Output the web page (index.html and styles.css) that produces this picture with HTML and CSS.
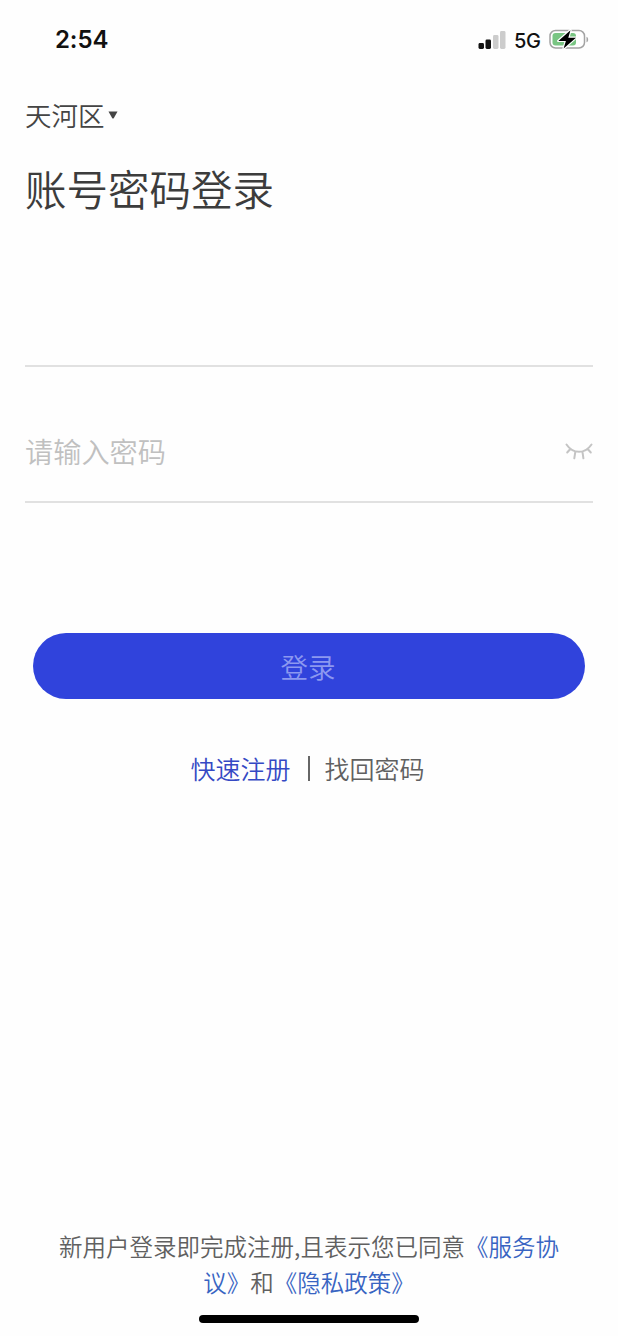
FILE: index.html
```html
<!DOCTYPE html>
<html lang="zh-CN">
<head>
<meta charset="utf-8">
<title>账号密码登录</title>
<link rel="stylesheet" href="styles.css">
</head>
<body>
<div class="screen">
  <header class="status-bar">
    <span class="time">2:54</span>
    <div class="indicators">
      <svg class="signal" width="28" height="20" viewBox="0 0 28 20">
        <rect x="0.5" y="13" width="5.500" height="6" rx="1.4" fill="#111"/>
        <rect x="7.500" y="9.500" width="5.500" height="9.500" rx="1.4" fill="#111"/>
        <rect x="15" y="5" width="5.500" height="14" rx="1.4" fill="#ccc"/>
        <rect x="22" y="1" width="5.500" height="18" rx="1.4" fill="#ccc"/>
      </svg>
      <span class="network">5G</span>
      <svg class="battery" width="41" height="22" viewBox="0 0 41 22">
        <rect x="1" y="1.500" width="34.5" height="17.500" rx="5.5" fill="#fff" stroke="#a3a3a3" stroke-width="1.5"/>
        <rect x="3.5" y="4" width="23.500" height="12.500" rx="3" fill="#79c583"/>
        <path d="M37.5 7.7c2.2.8 2.2 4.8 0 5.600z" fill="#a3a3a3"/>
        <path d="M21.500 1.200 9.300 11.900h7.600L14.600 19.600 27 8.700h-7.700z" fill="#000" stroke="#fff" stroke-width="2.4" paint-order="stroke" stroke-linejoin="round"/>
      </svg>
    </div>
  </header>
  <main class="login">
    <div class="district"><span>天河区</span><svg width="10" height="8" viewBox="0 0 10 8"><path d="M.5 .4h9L5.9 7q-.9 1-1.8 0z" fill="#444"/></svg></div>
    <h1 class="title">账号密码登录</h1>
    <div class="field account"></div>
    <div class="field password">
      <span class="placeholder">请输入密码</span>
      <svg class="eye" width="28" height="20" viewBox="0 0 28 20" fill="none" stroke="#c4c4c4" stroke-width="2" stroke-linecap="round">
        <path d="M1.500 2.500C8 12.200 20 12.200 26.500 2.500M5.300 7 2.200 10.500M10.400 9.400 9.300 16.300M17.400 9.400 18.400 16.300M22.700 7 25.800 10.500"/>
      </svg>
    </div>
    <button class="submit" type="button">登录</button>
    <nav class="links"><a class="register">快速注册</a><i class="divider"></i><a>找回密码</a></nav>
  </main>
  <footer class="agreement">
    <p>新用户登录即完成注册,且表示您已同意<a>《服务协</a></p>
    <p><a>议》</a>和<a>《隐私政策》</a></p>
    <div class="home-indicator"></div>
  </footer>
</div>
</body>
</html>
```
FILE: styles.css
```css
* { box-sizing: border-box; }
body { margin: 0; background: #fff; }
.screen {
  width: 618px;
  height: 1336px;
  display: flex;
  flex-direction: column;
  background: #fefefe;
  color: #444;
  font-family: "Noto Sans CJK SC", sans-serif;
  font-weight: 350;
  overflow: hidden;
}
.status-bar {
  height: 80px;
  padding: 0 28px 0 55px;
  display: flex;
  align-items: center;
  justify-content: space-between;
  font-family: Inter, sans-serif;
  color: #111;
}
.time { font-size: 24px; font-weight: 600; line-height: 30px; letter-spacing: -.1px; }
.indicators { display: flex; align-items: center; }
.network { margin: 1px 8px 0 8px; width: 27px; font-size: 20px; font-weight: 500; line-height: 24px; letter-spacing: -.3px; }
.login { display: flex; flex-direction: column; padding: 0 25px; }
.district { height: 70px; display: flex; align-items: center; gap: 3px; font-size: 26.500px; line-height: 70px; }
.title { margin: 0; height: 78px; font-size: 41.500px; line-height: 76px; font-weight: 350; color: #3c3c3c; }
.field { border-bottom: 2px solid #e1e1e1; }
.account { height: 139px; }
.password {
  height: 136px;
  padding-top: 34px;
  display: flex;
  align-items: center;
  justify-content: space-between;
}
.placeholder { font-size: 28.200px; line-height: 40px; color: #c0c0c0; }
.eye { margin-top: 2px; }
.submit {
  height: 66px;
  margin: 130px 8px 0;
  padding: 0 2px 0 0;
  border: 0;
  border-radius: 33px;
  background: #3043dc;
  color: #8c98f0;
  font: 350 27.500px/66px "Noto Sans CJK SC", sans-serif;
}
.links { margin-top: 51px; padding-right: 3px; display: flex; align-items: center; justify-content: center; font-size: 25px; line-height: 36px; color: #606060; }
.register { color: #3549c4; }
.divider { width: 2px; height: 25px; margin: 0 15px 0 17px; background: #666; }
.agreement { margin-top: auto; display: flex; flex-direction: column; align-items: center; font-size: 23.500px; line-height: 36px; color: #606060; white-space: nowrap; }
.agreement p { margin: 0; }
.agreement a { color: #3864c2; }
.home-indicator { width: 220px; height: 8px; margin: 15px 0 13px; border-radius: 4px; background: #000; }
```
